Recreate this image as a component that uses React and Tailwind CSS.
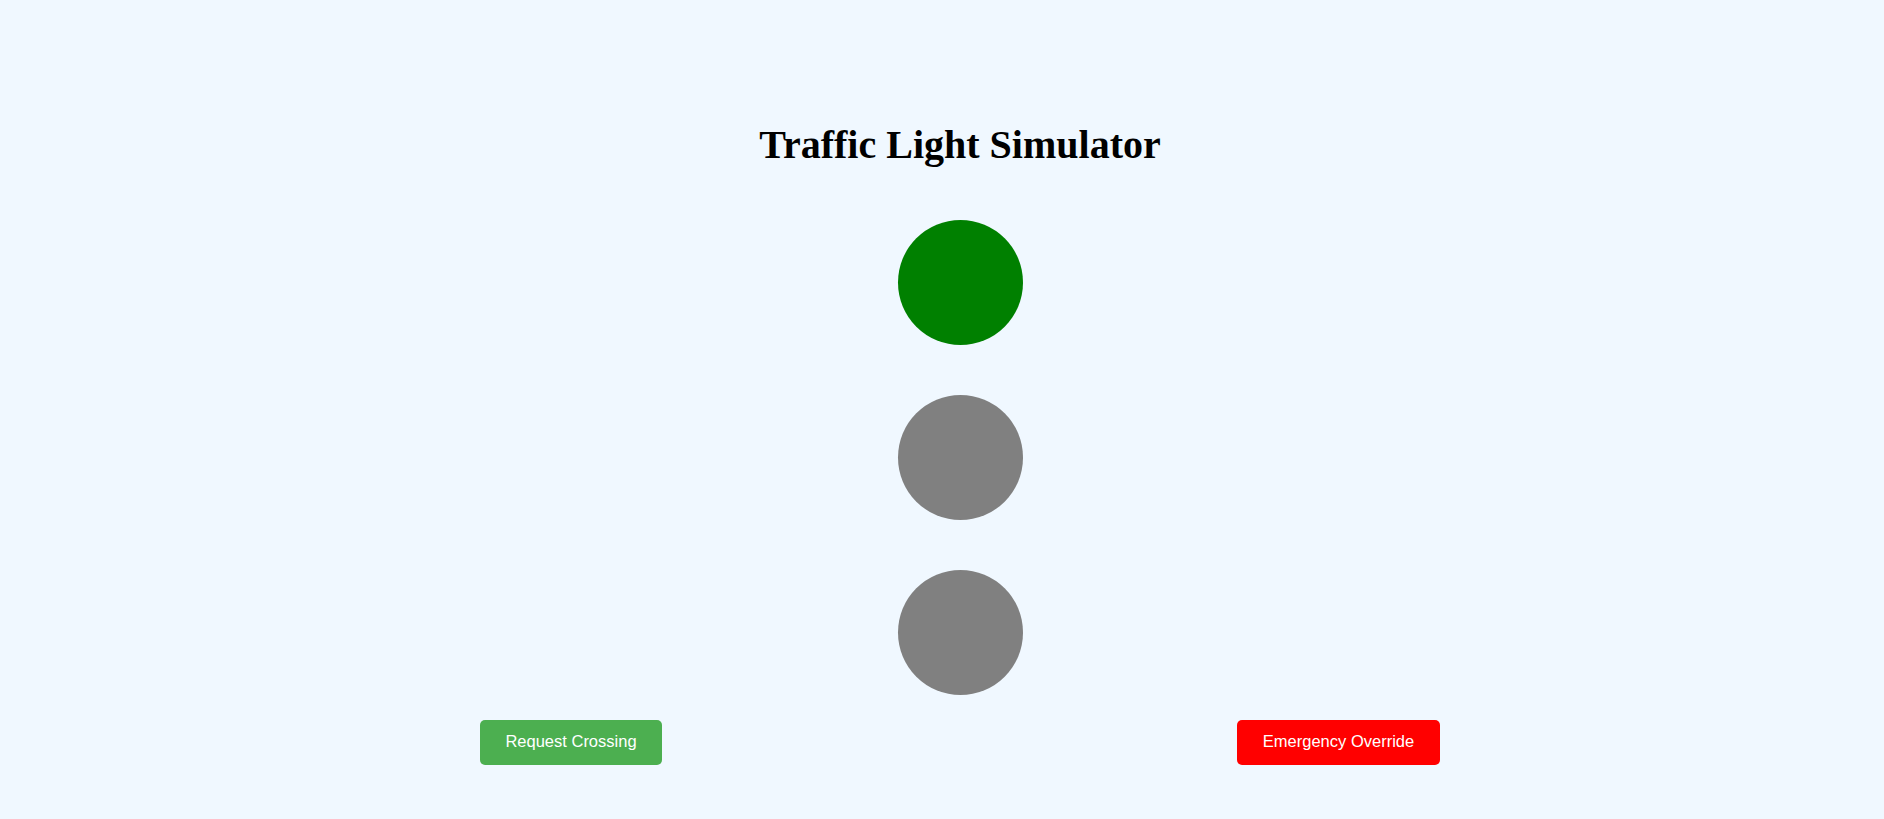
import React from "react";

export default function App() {
  return (
    <div className="min-h-screen w-full bg-[#f0f8ff] pl-[36px] flex flex-col items-center">
      <h1 className="mt-[122px] text-[40px] leading-[46px] font-bold text-black [font-family:'Liberation_Serif','Times_New_Roman',serif]">
        Traffic Light Simulator
      </h1>
      <div className="mt-[52px] flex flex-col items-center gap-[50px]">
        <div className="w-[125px] h-[125px] rounded-full bg-[#008000]" />
        <div className="w-[125px] h-[125px] rounded-full bg-[#808080]" />
        <div className="w-[125px] h-[125px] rounded-full bg-[#808080]" />
      </div>
      <div className="mt-[25px] w-[960px] flex justify-between [font-family:'Liberation_Sans',Arial,sans-serif]">
        <button className="w-[182px] h-[45px] pb-[2px] rounded-[5px] bg-[#4caf50] text-white text-[16.5px]">
          Request Crossing
        </button>
        <button className="w-[203px] h-[45px] pb-[2px] rounded-[5px] bg-[#ff0000] text-white text-[16.5px]">
          Emergency Override
        </button>
      </div>
    </div>
  );
}
